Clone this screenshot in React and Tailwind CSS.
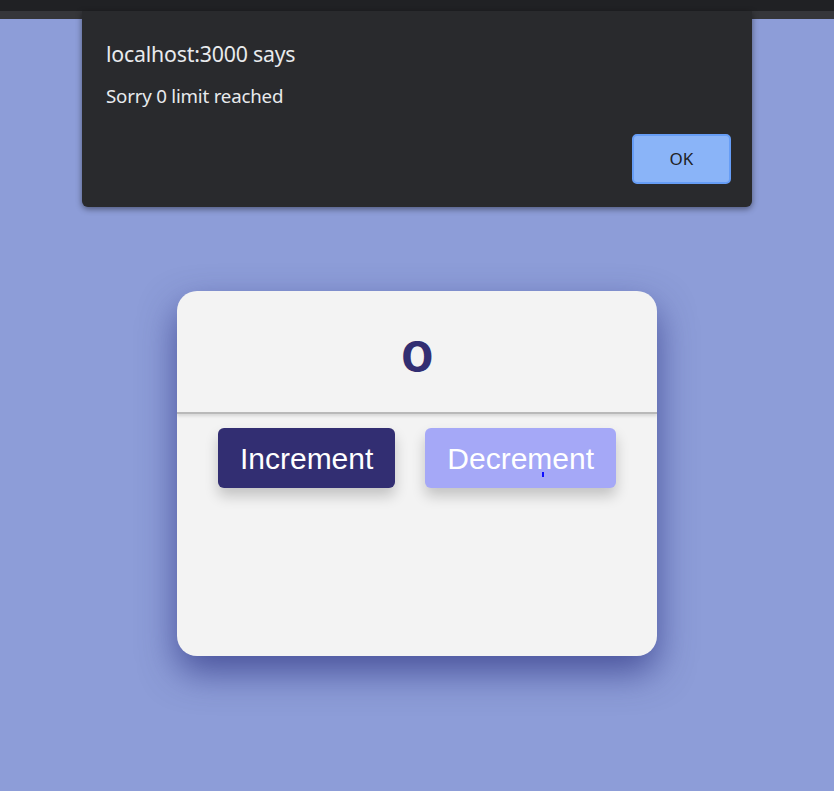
import React from 'react';

const App = () => {
  return (
    <div className="relative w-full h-[791px] bg-[#8d9dd8] overflow-hidden" style={{ fontFamily: '"Liberation Sans", Arial, sans-serif' }}>
      {/* browser chrome strip */}
      <div className="h-[11px] bg-[#202124]"></div>
      <div className="h-[8px] bg-[#35363a]"></div>

      {/* alert dialog */}
      <div className="absolute left-[82px] top-[11px] w-[670px] h-[196px] bg-[#292a2d] rounded-b-[6px] shadow-[0_2px_6px_rgba(0,0,0,0.45)] px-6 pt-[29px] font-['Noto_Sans',sans-serif]">
        <p className="text-[21.3px] leading-[28px] text-[#e8eaed] tracking-[-0.2px]">localhost:3000 says</p>
        <p className="mt-[16px] text-[18.7px] leading-[24px] text-[#e8eaed] tracking-[-0.2px]">Sorry 0 limit reached</p>
        <div className="flex justify-end mt-[26px]">
          <button className="w-[99px] h-[50px] mr-[-3px] rounded-[5px] bg-[#8ab4f8] border-2 border-[#669df6] text-[17px] text-[#202124]">
            OK
          </button>
        </div>
      </div>

      {/* counter card */}
      <div className="flex justify-center pt-[272px]">
        <div className="w-[480px] h-[365px] bg-[#f3f3f3] rounded-[20px] shadow-[0_16px_36px_rgba(40,45,125,0.68)] overflow-hidden">
          <div className="h-[123px] flex items-center justify-center border-b-2 border-[#b9b9b9] shadow-[0_2px_3px_rgba(0,0,0,0.12)]">
            <span className="text-[42px] font-bold text-[#322e72] leading-none pt-[10px] scale-x-[1.15]" style={{ fontFamily: 'Inter, sans-serif' }}>0</span>
          </div>
          <div className="flex justify-center gap-[30px] pt-[14px]">
            <button className="h-[60px] px-[22px] rounded-[6px] bg-[#322e72] text-white text-[30px] shadow-[0_8px_14px_rgba(0,0,0,0.2)]">
              Increment
            </button>
            <button className="relative h-[60px] px-[22px] rounded-[6px] bg-[#a5a8f7] text-white text-[30px] shadow-[0_8px_14px_rgba(0,0,0,0.2)]">
              Decrement
              <span className="absolute left-[117px] top-[44px] w-[2px] h-[5px] bg-[#1010ff]"></span>
            </button>
          </div>
        </div>
      </div>
    </div>
  );
};

export default App;
